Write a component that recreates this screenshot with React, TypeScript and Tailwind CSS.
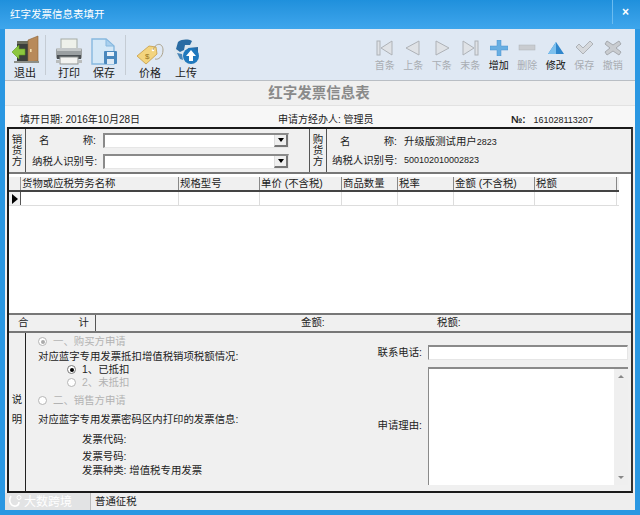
import type { ReactNode } from 'react';

const FONT = 'font-["Liberation_Sans","Noto_Sans_CJK_SC",sans-serif]';

function ExitIcon() {
  return (
    <svg width="28" height="30" viewBox="0 0 28 30">
      <rect x="6" y="6" width="17" height="21" fill="#3b3f3c" />
      <rect x="6" y="6" width="17" height="3" fill="#6d705f" />
      <path d="M17 5 L27 1 L27 26 L17 27 Z" fill="#b88a5a" stroke="#8c6235" strokeWidth="0.6" />
      <rect x="19" y="14" width="1.6" height="3" fill="#f2dcae" />
      <rect x="3" y="26" width="25" height="2" fill="#8d8f88" />
      <path d="M1 17 L8 10 L8 14 L14 14 L14 20 L8 20 L8 24 Z" fill="#8cc63f" stroke="#5f9a1c" strokeWidth="0.6" />
    </svg>
  );
}

function PrintIcon() {
  return (
    <svg width="28" height="27" viewBox="0 0 28 27">
      <rect x="6" y="1" width="16" height="10" fill="#eef1ea" stroke="#a5aba5" />
      <rect x="1" y="10" width="26" height="11" rx="2" fill="#9a9fa1" />
      <rect x="2" y="10" width="24" height="3" fill="#c4c8c9" />
      <rect x="2" y="17" width="24" height="4" fill="#4b5054" />
      <rect x="5" y="19" width="18" height="7" fill="#f3f3f1" stroke="#8f9392" />
      <rect x="1" y="22" width="4" height="3" fill="#b9bcbc" />
      <rect x="23" y="22" width="4" height="3" fill="#b9bcbc" />
    </svg>
  );
}

function SaveIcon() {
  return (
    <svg width="26" height="27" viewBox="0 0 26 27">
      <path d="M1 1 L15 1 L23 8 L23 26 L1 26 Z" fill="#d4e8f7" stroke="#86b8df" strokeWidth="1.4" />
      <path d="M15 1 L15 8 L23 8 Z" fill="#a9d0ee" stroke="#86b8df" />
      <rect x="13" y="13" width="13" height="13" rx="1" fill="#4a88bd" />
      <rect x="16" y="14" width="7" height="4" fill="#e9f2f9" />
      <rect x="16" y="21" width="7" height="5" fill="#dfeaf4" />
    </svg>
  );
}

function PriceIcon() {
  return (
    <svg width="28" height="22" viewBox="0 0 28 22">
      <path d="M1 13 L13 3 L20 4 L21 11 L10 21 Z" fill="#f3d47e" stroke="#c79c45" strokeWidth="0.8" />
      <circle cx="17" cy="7" r="1.3" fill="#fff" />
      <text x="9" y="16" fontSize="8" fill="#9a7420" fontFamily="Liberation Sans">$</text>
      <path d="M17 7 C20 -1 27 0 27 7 C27 14 22 17 19 16" fill="none" stroke="#a59a80" strokeWidth="0.9" />
    </svg>
  );
}

function UploadIcon() {
  return (
    <svg width="27" height="26" viewBox="0 0 27 26">
      <circle cx="13" cy="12" r="12" fill="#dde6ee" />
      <path d="M5 3 C9 0 15 0 19 2 L17 6 L12 6 L11 11 L7 13 L3 10 Z M15 9 L25 8 L25 14 L17 14 Z" fill="#2a6ba3" />
      <path d="M4 14 L9 15 L10 21 L7 20 Z" fill="#4a86b8" />
      <circle cx="18" cy="17" r="8" fill="#1f78bd" />
      <path d="M18 11 L23 17 L20 17 L20 22 L16 22 L16 17 L13 17 Z" fill="#fff" />
    </svg>
  );
}

function NavIcon({ kind }: { kind: string }) {
  const fill = '#dfe2e6';
  const stroke = '#aeb2b7';
  return (
    <svg width="18" height="16" viewBox="0 0 18 16">
      {kind === 'first' && (
        <>
          <rect x="1" y="1" width="3" height="14" fill={fill} stroke={stroke} />
          <path d="M16 1 L5 8 L16 15 Z" fill={fill} stroke={stroke} />
        </>
      )}
      {kind === 'prev' && <path d="M15 1 L2 8 L15 15 Z" fill={fill} stroke={stroke} />}
      {kind === 'next' && <path d="M3 1 L16 8 L3 15 Z" fill={fill} stroke={stroke} />}
      {kind === 'last' && (
        <>
          <path d="M2 1 L13 8 L2 15 Z" fill={fill} stroke={stroke} />
          <rect x="14" y="1" width="3" height="14" fill={fill} stroke={stroke} />
        </>
      )}
      {kind === 'add' && <path d="M7 0 H11 V6 H18 V10 H11 V16 H7 V10 H0 V6 H7 Z" fill="#68aee2" stroke="#4a92cc" strokeWidth="0.5" />}
      {kind === 'minus' && <rect x="1" y="5" width="16" height="5" fill="#c9ccd0" stroke="#aeb2b7" strokeWidth="0.5" />}
      {kind === 'edit' && (
        <>
          <path d="M9 2 L17 14 L1 14 Z" fill="#2f86cc" />
          <path d="M9 2 L9 14 L1 14 Z" fill="#7cc0ee" />
        </>
      )}
      {kind === 'ok' && <path d="M1 7 L4 4 L8 8 L15 1 L18 4 L8 14 Z" fill="#d5d8dc" stroke="#aeb2b7" />}
      {kind === 'cancel' && <path d="M3 1 L9 5 L15 1 L17 4 L12 8 L17 12 L15 15 L9 11 L3 15 L1 12 L6 8 L1 4 Z" fill="#c9ccd0" stroke="#a6aaaf" />}
    </svg>
  );
}

function BigTool({ label, icon, w }: { label: string; icon: ReactNode; w: string }) {
  return (
    <div className={`flex flex-col items-center justify-end ${w} h-[50px] text-[11px] text-[#222]`}>
      <div className="flex items-end h-[32px]">{icon}</div>
      <span className="leading-[14px] mt-[1px]">{label}</span>
    </div>
  );
}

function NavTool({ label, kind, on }: { label: string; kind: string; on?: boolean }) {
  return (
    <div className={`flex flex-col items-center w-[28.5px] text-[10px] ${on ? 'text-[#111]' : 'text-[#a9adb2]'}`}>
      <div className="h-[16px]"><NavIcon kind={kind} /></div>
      <span className="leading-[12px] mt-[4px] whitespace-nowrap">{label}</span>
    </div>
  );
}

function Combo() {
  return (
    <div className="flex w-[186px] h-[15px] bg-white border-t-2 border-l-2 border-[#8a8a8a] border-b border-r border-b-[#e6e6e6] border-r-[#e6e6e6]">
      <div className="flex-1" />
      <div className="w-[14px] bg-[#efefef] border-l border-[#ddd] border-b-2 border-r-2 border-b-[#777] border-r-[#777] flex items-center justify-center">
        <div className="w-0 h-0 border-x-[3.5px] border-x-transparent border-t-[4px] border-t-black" />
      </div>
    </div>
  );
}

function VLabel({ text, w }: { text: string[]; w: string }) {
  return (
    <div className={`${w} shrink-0 flex flex-col items-center justify-center text-[10.5px] text-[#222]`}>
      {text.map((t) => (
        <span key={t} className="block h-[11px] leading-[11px]">{t}</span>
      ))}
    </div>
  );
}

function Radio({ checked, disabled }: { checked?: boolean; disabled?: boolean }) {
  return (
    <span className={`inline-flex shrink-0 items-center justify-center w-[9px] h-[9px] rounded-full border ${disabled ? 'border-[#b5b5b5]' : 'border-[#777]'} bg-white`}>
      {checked && <span className={`w-[4px] h-[4px] rounded-full ${disabled ? 'bg-[#aaa]' : 'bg-black'}`} />}
    </span>
  );
}

const columns = [
  { name: '货物或应税劳务名称', w: 'w-[158px]' },
  { name: '规格型号', w: 'w-[81px]' },
  { name: '单价 (不含税)', w: 'w-[82px]' },
  { name: '商品数量', w: 'w-[56px]' },
  { name: '税率', w: 'w-[56px]' },
  { name: '金额 (不含税)', w: 'w-[81px]' },
  { name: '税额', w: 'w-[82px]' },
];

export default function App() {
  return (
    <div className={`w-[640px] h-[515px] flex flex-col bg-[#2a97e2] overflow-hidden ${FONT}`}>
      {/* title bar */}
      <div className="h-[29px] shrink-0 flex items-start justify-between bg-gradient-to-b from-[#1f90dc] to-[#3ea6ec] pl-[10px] pr-[8px]">
        <span className="text-[10.5px] leading-[29px] text-white">红字发票信息表填开</span>
        <div className="flex items-center justify-center w-[20px] h-[24px] pl-[6px] border-l border-[#6bbcf0] text-white font-bold text-[12px]">×</div>
      </div>

      <div className="flex-1 mx-[5px] mb-[5px] flex flex-col bg-[#f0f0f0] min-h-0">
        {/* toolbar */}
        <div className="h-[52px] shrink-0 flex items-center justify-between bg-[#dfe8f3] border-b border-[#b9bec4] pr-[8px]">
          <div className="flex items-center">
            <BigTool label="退出" w="w-[40px]" icon={<ExitIcon />} />
            <div className="w-px h-[40px] bg-[#c5ccd4] mr-[4px]" />
            <BigTool label="打印" w="w-[38px]" icon={<PrintIcon />} />
            <BigTool label="保存" w="w-[32px]" icon={<SaveIcon />} />
            <div className="w-px h-[40px] bg-[#c5ccd4] mx-[5px]" />
            <BigTool label="价格" w="w-[38px]" icon={<PriceIcon />} />
            <BigTool label="上传" w="w-[34px]" icon={<UploadIcon />} />
          </div>
          <div className="flex items-start pt-[2px]">
            <NavTool label="首条" kind="first" />
            <NavTool label="上条" kind="prev" />
            <NavTool label="下条" kind="next" />
            <NavTool label="末条" kind="last" />
            <NavTool label="增加" kind="add" on />
            <NavTool label="删除" kind="minus" />
            <NavTool label="修改" kind="edit" on />
            <NavTool label="保存" kind="ok" />
            <NavTool label="撤销" kind="cancel" />
          </div>
        </div>

        {/* form title */}
        <div className="h-[25px] shrink-0 flex items-center justify-center pt-[1px] pr-[2px] text-[14.5px] font-bold text-[#8a8a8a] border-b border-[#e2e2e2]">
          红字发票信息表
        </div>

        {/* meta row */}
        <div className="h-[21px] shrink-0 flex items-end text-[10px] text-[#222] bg-[#f7f7f7] leading-[14px]">
          <span className="ml-[15px] w-[258px]">填开日期: 2016年10月28日</span>
          <span className="w-[233px]">申请方经办人: 管理员</span>
          <span className="font-bold">№:</span>
          <span className="ml-[8px] text-[9px]">161028113207</span>
        </div>

        {/* framed body */}
        <div className="flex-1 mx-[2px] flex flex-col border-2 border-[#1a1a1a] border-r-[#333] min-h-0 bg-[#f0f0f0]">
          {/* seller and buyer */}
          <div className="h-[45px] shrink-0 flex border-b-2 border-[#777] text-[10.4px] text-[#222]">
            <VLabel text={['销', '货', '方']} w="w-[16px]" />
            <div className="w-[285px] border-l border-r border-[#555] pl-[6px] pt-[4px] flex flex-col gap-[5px]">
              <div className="flex items-center">
                <span className="w-[71px] pr-[7px] flex justify-between"><span className="ml-[7px]">名</span><span>称:</span></span>
                <Combo />
              </div>
              <div className="flex items-center">
                <span className="w-[71px] whitespace-nowrap">纳税人识别号:</span>
                <Combo />
              </div>
            </div>
            <VLabel text={['购', '货', '方']} w="w-[16px]" />
            <div className="flex-1 border-l border-[#555] pl-[5px] pt-[7px] flex flex-col gap-[7px]">
              <div className="flex items-center h-[12px]">
                <span className="w-[72px] pr-[7px] flex justify-between"><span className="ml-[8px]">名</span><span>称:</span></span>
                <span>升级版测试用户<span className="text-[9px]">2823</span></span>
              </div>
              <div className="flex items-center h-[12px]">
                <span className="w-[72px] whitespace-nowrap">纳税人识别号:</span>
                <span className="text-[9px]">500102010002823</span>
              </div>
            </div>
          </div>

          {/* table */}
          <div className="flex-1 bg-white pt-[3px] min-h-0 text-[10.4px] text-[#222] border-b-2 border-[#777]">
            <div className="flex h-[15px] w-[610px] bg-[#f0f0f0] border-b-2 border-[#444]">
              <div className="w-[12px] border-r border-[#999] shrink-0" />
              {columns.map((c) => (
                <div key={c.name} className={`${c.w} shrink-0 border-r border-[#888] pl-[1px] leading-[13px] whitespace-nowrap`}>
                  {c.name}
                </div>
              ))}
            </div>
            <div className="flex h-[14px] w-[610px] border-b border-[#ddd]">
              <div className="w-[12px] shrink-0 flex items-center justify-center bg-[#f0f0f0] border-r border-[#555]">
                <div className="w-0 h-0 border-y-[5px] border-y-transparent border-l-[6px] border-l-black" />
              </div>
              {columns.map((c) => (
                <div key={c.name} className={`${c.w} shrink-0 border-r border-[#ddd]`} />
              ))}
            </div>
          </div>

          {/* totals */}
          <div className="h-[18px] shrink-0 flex items-center text-[10.4px] text-[#222] border-b-2 border-[#777]">
            <span className="w-[87px] flex justify-between pl-[9px] pr-[6px] border-r border-[#555] h-full items-center"><span>合</span><span>计</span></span>
            <span className="ml-[205px] w-[136px]">金额:</span>
            <span>税额:</span>
          </div>

          {/* notes */}
          <div className="h-[158px] shrink-0 flex text-[10.4px] text-[#222]">
            <div className="w-[16px] shrink-0 flex flex-col items-center justify-center gap-[8px] pb-[4px] leading-[12px]">
              <span>说</span>
              <span>明</span>
            </div>
            <div className="w-[348px] border-l border-[#222] pl-[12px] pt-[1px] flex flex-col leading-[13px]">
              <div className="h-[15px] flex items-center gap-[6px] text-[#b3b3b3]"><Radio checked disabled /><span>一、购买方申请</span></div>
              <div className="h-[14px] flex items-center whitespace-nowrap">对应蓝字专用发票抵扣增值税销项税额情况:</div>
              <div className="h-[13px] flex items-center gap-[6px] pl-[29px]"><Radio checked /><span>1、已抵扣</span></div>
              <div className="h-[13px] flex items-center gap-[6px] pl-[29px] text-[#b3b3b3]"><Radio disabled /><span>2、未抵扣</span></div>
              <div className="h-[22px] flex items-center gap-[6px] text-[#b3b3b3]"><Radio disabled /><span>二、销售方申请</span></div>
              <div className="h-[16px] flex items-center whitespace-nowrap">对应蓝字专用发票密码区内打印的发票信息:</div>
              <div className="h-[24px] flex items-center pl-[44px]">发票代码:</div>
              <div className="h-[10px] flex items-center pl-[44px]">发票号码:</div>
              <div className="h-[18px] flex items-center pl-[44px]">发票种类: 增值税专用发票</div>
            </div>
            <div className="flex-1 flex flex-col pt-[12px] pl-[2px] pr-[3px]">
              <div className="flex items-center h-[15px]">
                <span className="w-[47px] text-right shrink-0 whitespace-nowrap">联系电话:</span>
                <div className="ml-[6px] flex-1 h-[15px] bg-white border-t-2 border-l border-[#8a8a8a] border-r border-r-[#e6e6e6] border-b border-b-[#e6e6e6]" />
              </div>
              <div className="flex items-center mt-[7px] h-[118px]">
                <span className="w-[47px] text-right shrink-0 whitespace-nowrap">申请理由:</span>
                <div className="ml-[6px] flex-1 h-[118px] flex bg-white border-t-2 border-l border-[#8a8a8a]">
                  <div className="flex-1" />
                  <div className="w-[14px] bg-[#efefef] flex flex-col items-center justify-between py-[6px]">
                    <div className="w-0 h-0 border-x-[3px] border-x-transparent border-b-[3px] border-b-[#888]" />
                    <div className="w-0 h-0 border-x-[3px] border-x-transparent border-t-[3px] border-t-[#888]" />
                  </div>
                </div>
              </div>
            </div>
          </div>
        </div>

        {/* status bar */}
        <div className="h-[17px] shrink-0 flex items-center text-[10.4px] text-[#222] bg-[#eeeeee]">
          <div className="w-[85px] h-full pl-[3px] flex items-center gap-[2px] text-white text-[12px] bg-[#e2e3e4]">
            <svg width="14" height="13" viewBox="0 0 14 13">
              <path d="M3 1 C0 6 3 12 8 11 C10 10.5 11 9 11 7" fill="none" stroke="#fff" strokeWidth="1.6" />
              <circle cx="11" cy="2.5" r="2" fill="none" stroke="#fff" strokeWidth="1" />
            </svg>
            <span className="whitespace-nowrap">大数跨境</span>
          </div>
          <div className="pl-[4px] border-l border-[#bbb] h-full flex items-center">普通征税</div>
        </div>
      </div>
    </div>
  );
}
